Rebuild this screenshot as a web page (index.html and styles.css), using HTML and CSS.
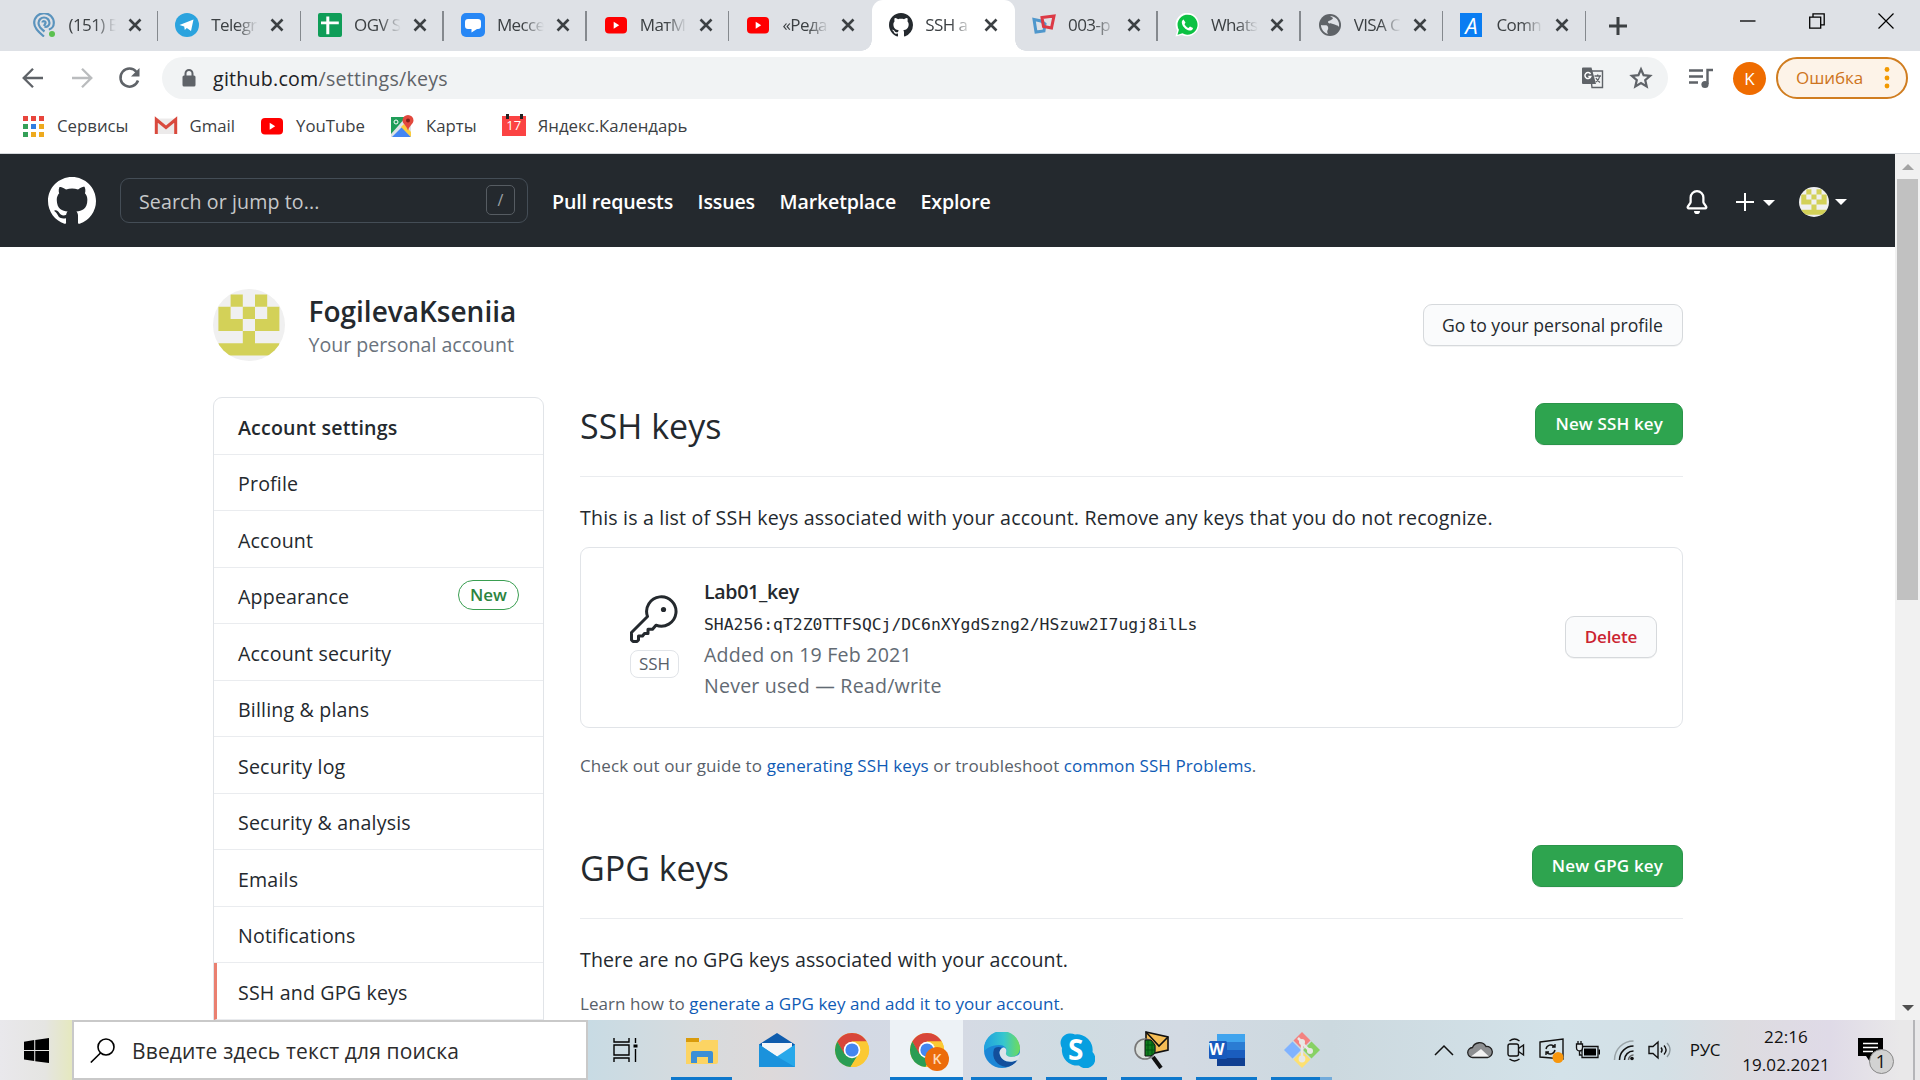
FILE: index.html
```html
<!DOCTYPE html>
<html lang="en">
<head>
<meta charset="utf-8">
<title>SSH and GPG keys</title>
<link rel="stylesheet" href="styles.css">
</head>
<body>
<svg class="defs" aria-hidden="true">
  <symbol id="x" viewBox="0 0 14 14"><path d="M1.500 1.500L12.500 12.500M12.500 1.500L1.500 12.500" stroke="#3c4043" stroke-width="2.600" fill="none"/></symbol>
  <symbol id="yt" viewBox="0 0 24 24"><rect x="1" y="4" width="22" height="16.500" rx="4" fill="#f00"/><path d="M9.700 8.700v7l5.500-3.500z" fill="#fff"/></symbol>
  <symbol id="mark" viewBox="0 0 16 16"><path fill="currentColor" fill-rule="evenodd" d="M8 0C3.580 0 0 3.580 0 8c0 3.540 2.290 6.530 5.470 7.590.4.070.55-.17.55-.38 0-.19-.01-.82-.01-1.490-2.010.37-2.530-.49-2.690-.94-.09-.23-.48-.94-.82-1.130-.28-.15-.68-.52-.01-.53.63-.01 1.080.58 1.230.82.72 1.210 1.870.87 2.330.66.070-.52.28-.87.51-1.070-1.780-.2-3.640-.89-3.640-3.950 0-.87.31-1.590.82-2.150-.08-.2-.36-1.020.08-2.120 0 0 .67-.21 2.200.82.64-.18 1.320-.27 2-.27s1.360.09 2 .27c1.530-1.040 2.200-.82 2.200-.82.44 1.100.16 1.920.08 2.120.51.56.82 1.270.82 2.150 0 3.070-1.870 3.750-3.650 3.950.29.25.54.73.54 1.480 0 1.070-.01 1.930-.01 2.200 0 .21.15.46.55.38A8.013 8.013 0 0016 8c0-4.420-3.580-8-8-8z"/></symbol>
  <symbol id="identicon" viewBox="0 0 72 72"><path fill="#f0f0f0" d="M0 0h72v72H0z"/><path fill="#d3d158" d="M17.600 5.500h12.200v12.200H17.600zM42 5.500h12.200v12.200H42zM5.400 17.700h12.200v12.200h12.200v12.200H5.400zM29.800 17.700H42v12.200H29.800zM54.200 17.700h12.200v24.400H42V29.900h12.200zM29.800 42.100H42v12.200H29.800zM5.400 54.300h61v12.200h-61z"/></symbol>
  <symbol id="chrome" viewBox="0 0 36 36"><circle cx="18" cy="18" r="17" fill="#fbc934"/><path fill="#d8463a" d="M3.300 9.500A17 17 0 0 1 32.700 9.500H18l-8 13z"/><path fill="#2a9d54" d="M3.300 9.500A17 17 0 0 0 16.500 35l8.200-13.500L10.500 22z"/><path fill="#fbc934" d="M18 9.500h14.700A17 17 0 0 1 16.500 35l8.500-13z"/><circle cx="18" cy="18" r="8.300" fill="#fff"/><circle cx="18" cy="18" r="6.600" fill="#4486f0"/></symbol>
</svg>

<header class="browser">
  <div class="tabstrip">
    <div class="tab"><svg class="fav" viewBox="0 0 24 24" fill="none" stroke="#5a93bd" stroke-width="2.200"><path d="M11 23.500C4 18 1.200 14 1.200 10a9.800 9.800 0 0 1 19.600 0c0 3-2 6-5 6.500M11.500 18.500C7.500 15.500 5.500 13 5.500 10a5.500 5.500 0 0 1 11 0c0 3-3 4.500-5 3.500M9.500 9.500c0-2 3.500-1.500 3 .5l-1.500 3"/><circle cx="19" cy="21" r="3" fill="#5bc04f" stroke="none"/></svg><span class="label">(151) В</span><svg class="close"><use href="#x"/></svg></div>
    <div class="tab"><svg class="fav" viewBox="0 0 24 24"><circle cx="12" cy="12" r="12" fill="#2ba3de"/><path d="M4.500 12L18.500 6.500 16 18l-4.200-3-2 2-.6-3.500z" fill="#fff"/></svg><span class="label">Telegr</span><svg class="close"><use href="#x"/></svg></div>
    <div class="tab"><svg class="fav" viewBox="0 0 24 24"><rect width="24" height="24" rx="2" fill="#0f9d58"/><path d="M8.300 3.500h3v5h9.500v2.700h-9.500v10h-3v-10H3V8.500h5.300z" fill="#fff"/></svg><span class="label">OGV S</span><svg class="close"><use href="#x"/></svg></div>
    <div class="tab"><svg class="fav" viewBox="0 0 24 24"><rect width="24" height="24" rx="5" fill="#2787f5"/><path d="M7 6h10a3 3 0 0 1 3 3v4a3 3 0 0 1-3 3h-1l-5.500 3.500V16H7a3 3 0 0 1-3-3V9a3 3 0 0 1 3-3z" fill="#fff"/></svg><span class="label">Мессе</span><svg class="close"><use href="#x"/></svg></div>
    <div class="tab"><svg class="fav"><use href="#yt"/></svg><span class="label">МатМ</span><svg class="close"><use href="#x"/></svg></div>
    <div class="tab no-line"><svg class="fav"><use href="#yt"/></svg><span class="label">«Реда</span><svg class="close"><use href="#x"/></svg></div>
    <div class="tab active"><svg class="fav mark"><use href="#mark"/></svg><span class="label">SSH a</span><svg class="close"><use href="#x"/></svg></div>
    <div class="tab"><svg class="fav" viewBox="0 0 24 24" fill="none" stroke-width="3"><path d="M2 6.500l7 1.500 4 3-1 7-8 1z" stroke="#4f97cc"/><path d="M10 4.500L22 3l-2.500 12-8-1.500z" stroke="#dc3a46"/></svg><span class="label">003-p</span><svg class="close"><use href="#x"/></svg></div>
    <div class="tab"><svg class="fav" viewBox="0 0 24 24"><path d="M.5 23.500l1.700-6A11.700 11.700 0 1 1 7 22z" fill="#fff"/><path d="M2.500 21.700l1.400-5A10 10 0 1 1 7.500 20.300z" fill="#0cc143"/><path d="M8.500 6.500l2 3-1 1.700c1 2 2.200 3 4 3.800l1.500-1.500 3 1.500c-.2 2-2 2.700-3.500 2.500-4-.6-7.500-4.500-7.700-8 0-1.500.7-2.500 1.700-3z" fill="#fff"/></svg><span class="label">Whats</span><svg class="close"><use href="#x"/></svg></div>
    <div class="tab"><svg class="fav" viewBox="0 0 24 24"><circle cx="12" cy="12" r="11" fill="#5f6368"/><path d="M3 12c3 1 6-1 7 2s-2 3 0 7c-4-1-7-5-7-9zM12 3l3 2c-1 3-5 2-5 4s3 1 5 2 5 1 6 3c1-6-3-11-9-11z" fill="#dee1e6"/></svg><span class="label">VISA С</span><svg class="close"><use href="#x"/></svg></div>
    <div class="tab"><span class="fav letter">A</span><span class="label">Comn</span><svg class="close"><use href="#x"/></svg></div>
    <div class="newtab"><svg width="18" height="18" viewBox="0 0 18 18"><path d="M9 0v18M0 9h18" stroke="#3c4043" stroke-width="3"/></svg></div>
    <div class="winctl">
      <svg width="16" height="16"><path d="M0 8h15.500" stroke="#000" stroke-width="1.300"/></svg>
      <svg width="16" height="16"><path d="M.7 4.200h11v11H.7zM4 4V.8h11.200v11H12" stroke="#000" stroke-width="1.300" fill="none"/></svg>
      <svg width="16" height="16"><path d="M.5 .5l15 15M15.500.5l-15 15" stroke="#000" stroke-width="1.200"/></svg>
    </div>
  </div>
  <div class="toolbar">
    <div class="navbtns">
      <svg width="24" height="24" viewBox="0 0 24 24" fill="none" stroke="#5f6368" stroke-width="2.300"><path d="M22 12H3M12 2.700L2.700 12l9.300 9.300"/></svg>
      <svg width="24" height="24" viewBox="0 0 24 24" fill="none" stroke="#babcbe" stroke-width="2.300"><path d="M2 12h19M12 2.700l9.300 9.300-9.300 9.300"/></svg>
      <svg width="24" height="24" viewBox="0 0 24 24" fill="none" stroke="#5f6368" stroke-width="2.500"><path d="M18.500 6A9 9 0 1 0 20 14.500"/><path d="M21.500 2v8.500H13z" fill="#5f6368" stroke="none"/></svg>
    </div>
    <div class="omnibox">
      <svg class="lock" width="14" height="19" viewBox="0 0 14 19"><rect x=".5" y="6.500" width="13" height="11" rx="1.500" fill="#5f6368"/><path d="M3.500 7V4.500a3.500 3.500 0 0 1 7 0V7" fill="none" stroke="#5f6368" stroke-width="2"/></svg>
      <span class="url">github.com<span>/settings/keys</span></span>
      <svg class="translate" width="24" height="24" viewBox="0 0 24 24"><path d="M9 5h12.500v16.500H11z" fill="#f1f3f4" stroke="#5f6368" stroke-width="1.400"/><path d="M2 1.500h8.500L15 18H2a1 1 0 0 1-1-1V2.500a1 1 0 0 1 1-1z" fill="#5f6368"/><path d="M9.500 8A3 3 0 1 0 9.800 10.500H7.300" fill="none" stroke="#fff" stroke-width="1.500"/><path d="M13.500 10h6.500M16.700 8.500V10M18.800 10c-.5 3-2.500 5-4 6M15 12c1 2 2.500 3.500 4 4.500" stroke="#5f6368" stroke-width="1.300" fill="none"/></svg>
      <svg width="24" height="24" viewBox="0 0 24 24"><path d="M12 3.200l2.600 6 6.500.6-4.900 4.300 1.500 6.400L12 17.100l-5.700 3.400 1.500-6.400-4.900-4.300 6.500-.6z" fill="none" stroke="#5f6368" stroke-width="2.200"/></svg>
    </div>
    <svg class="queue" width="24" height="24" viewBox="0 0 24 24" fill="none" stroke="#5f6368" stroke-width="2.400"><path d="M0 4.500h14M0 10.500h14M0 16.500h9M24 4h-5.500v14"/><circle cx="16" cy="18.500" r="3.600" fill="#5f6368" stroke="none"/></svg>
    <div class="person">K</div>
    <div class="error"><span>Ошибка</span><svg width="6" height="24" viewBox="0 0 6 24" fill="#f29900"><circle cx="3" cy="3.500" r="2.400"/><circle cx="3" cy="12" r="2.400"/><circle cx="3" cy="20" r="2.400"/></svg></div>
  </div>
  <nav class="bookmarks">
    <a><svg class="bi" viewBox="0 0 24 24"><path d="M2 2h5v5H2zM10 2h5v5h-5zM18 2h5v5h-5z" fill="#e8453c"/><path d="M2 10h5v5H2zM2 18h5v5H2z" fill="#34a058"/><path d="M10 10h5v5h-5z" fill="#2f7de1"/><path d="M18 10h5v5h-5zM10 18h5v5h-5zM18 18h5v5h-5z" fill="#eeaa1e"/></svg><span>Сервисы</span></a>
    <a><svg class="bi" viewBox="0 0 24 24"><path d="M1 4.500h22V20H1z" fill="#eceaea"/><path d="M2.300 20V5.500L12 13.500l9.700-8V20" fill="none" stroke="#d9493d" stroke-width="3"/></svg><span>Gmail</span></a>
    <a><svg class="bi"><use href="#yt"/></svg><span>YouTube</span></a>
    <a><svg class="bi" viewBox="0 0 24 24"><path d="M1 3h20v20H1z" fill="#dfe3e6"/><path d="M1 3h15L1 20z" fill="#1f9d58"/><path d="M2 23l10-10 9 10z" fill="#4386f4"/><path d="M11 13l3-3 7 8v5z" fill="#fccd3c"/><path d="M18 1a5.500 5.500 0 0 1 5.500 5.500c0 3-4 5-5.500 10-1.500-5-5.500-7-5.500-10A5.500 5.500 0 0 1 18 1z" fill="#e2483d"/><circle cx="18" cy="6.500" r="2" fill="#851f1a"/><circle cx="6" cy="8" r="2" fill="none" stroke="#fff"/></svg><span>Карты</span></a>
    <a><span class="cal">17</span><span>Яндекс.Календарь</span></a>
  </nav>
</header>

<div class="viewport">
  <div class="page">
    <header class="gh">
      <svg class="logo"><use href="#mark"/></svg>
      <div class="search"><span>Search or jump to...</span><kbd>/</kbd></div>
      <nav><a>Pull requests</a><a>Issues</a><a>Marketplace</a><a>Explore</a></nav>
      <div class="user">
        <svg width="24" height="24" viewBox="0 0 16 16" fill="#fff"><path d="M8 16a2 2 0 001.985-1.750c.017-.137-.097-.25-.235-.25h-3.500c-.138 0-.252.113-.235.250A2 2 0 008 16z"/><path fill-rule="evenodd" d="M8 1.500A3.500 3.500 0 004.500 5v2.947c0 .346-.102.683-.294.970l-1.703 2.556 10.990.010-1.700-2.565a1.750 1.750 0 01-.294-.970V5A3.500 3.500 0 008 1.500zM3 5a5 5 0 0110 0v2.947c0 .050.015.098.042.139l1.703 2.555A1.518 1.518 0 0113.482 13H2.518a1.518 1.518 0 01-1.263-2.360l1.703-2.554A.25.25 0 003 7.947V5z"/></svg>
        <svg class="plus" width="18" height="18"><path d="M9 0v18M0 9h18" stroke="#fff" stroke-width="2"/></svg>
        <i class="caret low"></i>
        <svg class="mini"><use href="#identicon"/></svg>
        <i class="caret"></i>
      </div>
    </header>
    <div class="container">
      <section class="profile">
        <svg class="avatar"><use href="#identicon"/></svg>
        <div class="who"><h1>FogilevaKseniia</h1><p>Your personal account</p></div>
        <button class="btn goto">Go to your personal profile</button>
      </section>
      <div class="columns">
        <nav class="menu">
          <h2>Account settings</h2>
          <a>Profile</a>
          <a>Account</a>
          <a>Appearance<b class="new">New</b></a>
          <a>Account security</a>
          <a>Billing &amp; plans</a>
          <a>Security log</a>
          <a>Security &amp; analysis</a>
          <a>Emails</a>
          <a>Notifications</a>
          <a class="current">SSH and GPG keys</a>
        </nav>
        <main>
          <div class="subhead"><h2>SSH keys</h2><button class="btn primary">New SSH key</button></div>
          <p class="lead">This is a list of SSH keys associated with your account. Remove any keys that you do not recognize.</p>
          <div class="keybox">
            <div class="kind">
              <svg width="48" height="48" viewBox="0 0 48 48" fill="none" stroke="#24292e" stroke-width="3" stroke-linejoin="round"><path d="M17.500 21.500A14.700 14.700 0 1 1 26 30.200L22.500 34.300H18V38.500H14.500L12.500 41H8.500V45L7 46.500H3L1.500 45V37.500z"/><circle cx="33.500" cy="14.500" r="2.600" fill="#24292e" stroke="none"/></svg>
              <span class="tag">SSH</span>
            </div>
            <div class="info">
              <strong>Lab01_key</strong>
              <code>SHA256:qT2Z0TTFSQCj/DC6nXYgdSzng2/HSzuw2I7ugj8ilLs</code>
              <span class="muted">Added on 19 Feb 2021</span>
              <span class="muted">Never used — Read/write</span>
            </div>
            <button class="btn danger">Delete</button>
          </div>
          <p class="help">Check out our guide to <a>generating SSH keys</a> or troubleshoot <a>common SSH Problems</a>.</p>
          <div class="subhead gpg"><h2>GPG keys</h2><button class="btn primary">New GPG key</button></div>
          <p class="lead none">There are no GPG keys associated with your account.</p>
          <p class="help second">Learn how to <a>generate a GPG key and add it to your account</a>.</p>
        </main>
      </div>
    </div>
  </div>
  <div class="scroll"><i class="up"></i><i class="thumb"></i><i class="down"></i></div>
</div>

<footer class="taskbar">
  <div class="start"><svg width="25" height="25" viewBox="0 0 24 24"><path d="M0 3.500L9.800 2v9.500H0zM10.800 1.900L24 0v11.500H10.800zM0 12.500h9.800V22L0 20.600zM10.800 12.500H24V24l-13.200-1.800z"/></svg></div>
  <div class="find"><svg width="25" height="25" viewBox="0 0 25 25" fill="none" stroke="#000" stroke-width="1.600"><circle cx="16" cy="9" r="8"/><path d="M10.500 15L.8 24.500"/></svg><span>Введите здесь текст для поиска</span></div>
  <div class="apps">
    <div class="view"><svg width="27" height="24" viewBox="0 0 27 24" fill="none" stroke="#000" stroke-width="1.400"><path d="M1 0v4h15V0M1 7h15v10H1zM1 24v-4h15v4M22.500 0v5M22.500 11v13"/><path d="M20.500 6.500h4v3h-4z" fill="#000" stroke="none"/></svg></div>
    <div class="run"><svg width="36" height="36" viewBox="0 0 36 36"><path d="M2 6h13v6H2z" fill="#d99b0b"/><path d="M2 10h14l2-2h16v22a2 2 0 0 1-2 2H2z" fill="#fcd463"/><path d="M7 31V21a2 2 0 0 1 2-2h18a2 2 0 0 1 2 2v10h-5v-6H13v6z" fill="#3d8fd6"/></svg></div>
    <div><svg width="36" height="36" viewBox="0 0 36 36"><path d="M0 12.500L18 1l18 11.500V18H0z" fill="#0f5cad"/><path d="M3 11h30v16H3z" fill="#f4f6f8"/><path d="M0 12.500l18 12 18-12V35H0z" fill="#27a8ea"/><path d="M0 12.500l18 12L36 35H0z" fill="#1b92dc"/></svg></div>
    <div><svg width="36" height="36"><use href="#chrome"/></svg></div>
    <div class="run on"><svg width="36" height="36"><use href="#chrome"/></svg><em>K</em></div>
    <div class="run"><svg width="36" height="36" viewBox="0 0 36 36"><defs><linearGradient id="eg" x1="0" x2="1"><stop offset="0" stop-color="#1f9fe0"/><stop offset=".55" stop-color="#36c6cf"/><stop offset="1" stop-color="#6fdc5a"/></linearGradient></defs><circle cx="18" cy="18" r="18" fill="#1b86d6"/><path d="M0 18A18 18 0 0 1 36 16c0 6-4 9-9 9s-6-2-5-4 1-8-7-8S1 17 0 20z" fill="url(#eg)"/><path d="M10 17c-3 9 3 17 12 18 5-.5 9-3 11.500-7-8 4-17 1-18-7 0-3 2-5 3-5-4-2-7-1-8.500 1z" fill="#134f9c"/><path d="M15.500 21c0-3 2-5.500 4.500-5.500 3 1 2.500 4 2 5.500s1 4 5 4 8-2 9-4c0 3-1 5-2.500 7-8 4-17 1-18-7z" fill="#dce4eb"/></svg></div>
    <div class="run"><svg width="36" height="36" viewBox="0 0 36 36"><path d="M10 1.500a10 10 0 0 1 6 1A15.500 15.500 0 0 1 33.500 20 9.500 9.500 0 0 1 20 33.500 15.500 15.500 0 0 1 3 16 9.500 9.500 0 0 1 10 1.500z" fill="#079fe0"/></svg><span class="sk">S</span></div>
    <div class="run"><svg width="38" height="38" viewBox="0 0 38 38"><path d="M13 1l22 5v13L17 23l-4-4z" fill="#f5bd55" stroke="#111" stroke-width="1.600"/><path d="M13 1l13 14 9-9" fill="none" stroke="#111" stroke-width="1.600"/><circle cx="12" cy="18" r="10" fill="#dadfdc" stroke="#777" stroke-width="1.600"/><path d="M12 9h6l4 5v8l-4 3h-6z" fill="#117d1c" stroke="#111"/><path d="M15 9v16M19 11v13M12 14h9M12 19h9" stroke="#051"/><path d="M20 26l8 11" stroke="#111" stroke-width="4"/></svg></div>
    <div class="run"><svg width="36" height="36" viewBox="0 0 36 36"><path d="M8 2h28v8.500H8z" fill="#40a4ee"/><path d="M8 10h28v8H8z" fill="#2b7cd3"/><path d="M8 18h28v8H8z" fill="#1a5dbe"/><path d="M8 26h28v8H8z" fill="#103f91"/><rect y="9" width="18" height="18" rx="1.500" fill="#185abd"/></svg><span class="wd">W</span></div>
    <div class="run split"><svg width="38" height="38" viewBox="0 0 38 38"><path d="M19 1l8.500 8.500L19 18l-8.500-8.500z" fill="#f38280"/><path d="M9.500 10.500L18 19l-8.500 8.500L1 19z" fill="#80b3ff"/><path d="M28.500 10.500L37 19l-8.500 8.500L20 19z" fill="#88d165"/><path d="M19 20l8.500 8.500L19 37l-8.500-8.500z" fill="#fde071"/><path d="M15 7l4 4v17M19 12l8 8" stroke="#e8e8e6" stroke-width="2.500" fill="none"/><circle cx="19" cy="11" r="3" fill="#e8e8e6"/><circle cx="19" cy="28" r="3.400" fill="#e8e8e6"/><circle cx="27" cy="20" r="3" fill="#e8e8e6"/></svg></div>
  </div>
  <div class="tray">
    <svg width="20" height="12" viewBox="0 0 20 12"><path d="M1 11l9-9 9 9" fill="none" stroke="#111" stroke-width="1.500"/></svg>
    <svg width="26" height="20" viewBox="0 0 26 20"><path d="M6 17.500a5 5 0 0 1-.5-10A7.500 7.500 0 0 1 19 6.500a5.500 5.500 0 0 1 1.500 11z" fill="#8d8f91" stroke="#222" stroke-width="1.300"/><path d="M4 16.500L14 9l8 7.500z" fill="#f2f2f2"/></svg>
    <svg width="18" height="24" viewBox="0 0 18 24" fill="none" stroke="#111" stroke-width="1.400"><rect x="1" y="6" width="10.500" height="12" rx="2"/><path d="M11.500 10.500L16.500 7v10l-5-3.500M2.500 3c3-2.300 7-2.300 10 0M2.500 21c3 2.300 7 2.300 10 0"/></svg>
    <svg width="26" height="26" viewBox="0 0 26 26" fill="none" stroke="#111" stroke-width="1.400"><path d="M1 5l23-3v20l-23-2z"/><path d="M7 12a5 5 0 0 1 8.500-2.500M16 7v3h-3M16 13a5 5 0 0 1-8.500 2.500M7 18v-3h3"/><circle cx="19" cy="20.500" r="5.500" fill="#f7960c" stroke="none"/></svg>
    <svg width="26" height="20" viewBox="0 0 26 20"><path d="M7 6.500h16v11H7z" fill="none" stroke="#111" stroke-width="1.300"/><path d="M9 8.500h12v7H9zM23.500 9.500H25v5h-1.500z"/><path d="M1.500 4h6v4a3 3 0 0 1-6 0zM3 4V1M6 4V1M4.500 10.500V15H7" fill="#dfe7ea" stroke="#111" stroke-width="1.300"/></svg>
    <svg width="22" height="22" viewBox="0 0 22 22" fill="none" stroke="#111" stroke-width="1.500"><path d="M1.500 21A19 19 0 0 1 20.500 2" stroke="#9aa4a8"/><path d="M6.500 21a14 14 0 0 1 14-14M11.500 21a9 9 0 0 1 9-9"/><circle cx="19" cy="19.500" r="1.800" fill="#111" stroke="none"/><path d="M15.500 21a5 5 0 0 1 5-5" stroke="#666"/></svg>
    <svg width="26" height="20" viewBox="0 0 26 20" fill="none" stroke="#111" stroke-width="1.400"><path d="M2 6.500h4L11 2v16l-5-4.500H2zM14 7.500c1.300 1.500 1.300 3.500 0 5M17 5.500c2.500 2.700 2.500 6.300 0 9"/><path d="M20 3c4 4 4 10 0 14" stroke="#8d999e"/></svg>
    <span class="lang">РУС</span>
    <span class="clock">22:16<br>19.02.2021</span>
    <span class="notes"><svg width="25" height="25" viewBox="0 0 25 25"><path d="M0 0h25v18H15l-3 6-4-6H0z"/><path d="M5 5.500h15M5 9.500h15M5 13.500h10" stroke="#fff" stroke-width="1.300"/></svg><em>1</em></span>
    <span class="desk"></span>
  </div>
</footer>
</body>
</html>
```
FILE: styles.css
```css
* { box-sizing: border-box; }
body { margin: 0; width: 1920px; height: 1080px; overflow: hidden; background: #fff; color: #24292e; font: 19.6px/31.5px "Open Sans", "Noto Sans", sans-serif; display: flex; flex-direction: column; }
h1, h2, p { margin: 0; }
svg { display: block; flex: none; }
.defs { position: absolute; width: 0; height: 0; }

/* browser chrome */
.browser { height: 154px; flex: none; border-bottom: 1px solid #d5d8dc; }
.tabstrip { height: 51px; background: #dee1e6; display: flex; padding-left: 15px; }
.tab { width: 142.8px; height: 51px; flex: none; display: flex; align-items: center; padding: 0 0 1px 17.5px; position: relative; }
.tab::after { content: ""; position: absolute; right: -.5px; top: 11px; width: 1.5px; height: 30px; background: #85898e; }
.tab.no-line::after, .tab.active::after { display: none; }
.tab.active { background: #fff; border-radius: 11px 11px 0 0; }
.tab.active::before { content: ""; position: absolute; left: -11px; right: -11px; bottom: 0; height: 11px; background: radial-gradient(circle at 0 0, transparent 10.5px, #fff 11px) left / 11px 11px no-repeat, radial-gradient(circle at 100% 0, transparent 10.5px, #fff 11px) right / 11px 11px no-repeat; }
.fav { width: 24px; height: 24px; }
.fav.mark { color: #24292e; }
.fav.letter { width: 22px; margin-right: 2px; background: #0a7df2; color: #fff; font: italic 22px/24px "Open Sans", sans-serif; text-align: center; }
.label { width: 47px; margin-left: 12px; overflow: hidden; white-space: nowrap; font-size: 17px; letter-spacing: -.6px; color: #3c4043; -webkit-mask-image: linear-gradient(90deg, #000 55%, transparent 100%); mask-image: linear-gradient(90deg, #000 55%, transparent 100%); }
.close { width: 14px; height: 14px; margin-left: 12px; }
.newtab { width: 65px; display: flex; align-items: center; justify-content: center; }
.winctl { margin-left: auto; width: 207px; display: flex; justify-content: space-around; padding: 13px 0 0; }
.toolbar { height: 55px; display: flex; align-items: center; padding: 0 12px 1px 21px; }
.navbtns { width: 141px; display: flex; gap: 24.5px; }
.omnibox { width: 1506px; height: 42px; border-radius: 21px; background: #f1f3f4; display: flex; align-items: center; padding: 0 15px 0 20px; }
.url { margin-left: 17px; padding-top: 1px; letter-spacing: .24px; color: #202124; }
.url span { color: #5f6368; }
.translate { margin-left: auto; margin-right: 24px; }
.queue { margin-left: 21px; }
.person { width: 33px; height: 33px; margin-left: 20px; border-radius: 50%; background: #ef6c00; color: #fff; font-size: 17px; line-height: 33px; text-align: center; }
.error { width: 132px; height: 42px; margin-left: auto; border: 2px solid #d07d20; border-radius: 21px; background: #fdf3e8; color: #ce7420; display: flex; align-items: center; justify-content: space-between; padding: 0 16px 0 18px; font-size: 17px; letter-spacing: -.08px; }
.bookmarks { display: flex; align-items: center; height: 40px; padding-left: 21px; font-size: 16.8px; color: #3c4043; }
.bookmarks a { display: flex; align-items: center; gap: 12px; margin-right: 25px; white-space: nowrap; }
.bi { width: 24px; height: 24px; }
.cal { width: 24px; height: 20px; background: #fb4343; color: #fff; font-size: 13px; line-height: 19px; text-align: center; position: relative; }
.cal::before { content: ""; position: absolute; left: 4px; right: 3px; top: -2px; height: 5px; border: solid #222; border-width: 0 3px; }

/* page */
.viewport { height: 866px; flex: none; display: flex; }
.page { width: 1895px; height: 866px; overflow: hidden; }
.gh { height: 93px; background: #24292e; display: flex; align-items: center; padding: 0 48px; color: #fff; }
.logo { width: 48px; height: 48px; }
.search { width: 408px; height: 45px; margin-left: 24px; border: 1px solid #444d56; border-radius: 9px; display: flex; align-items: center; justify-content: space-between; padding: 3px 12px 0 18px; color: #c6c8ca; letter-spacing: .1px; }
.search kbd { width: 29px; height: 30px; margin-top: -4px; border: 1px solid #565c62; border-radius: 5px; font: 16px/28px "Open Sans", sans-serif; text-align: center; color: #9da1a5; }
.gh nav { display: flex; gap: 24.5px; margin-left: 24px; padding-top: 2px; font-weight: 600; letter-spacing: -.15px; white-space: nowrap; }
.user { margin-left: auto; display: flex; align-items: center; padding-top: 2px; }
.plus { margin-left: 27px; }
.caret { border: 6px solid transparent; border-top-color: #fff; border-bottom: 0; margin-left: 6px; }
.caret.low { margin: 3px 24px 0 9px; }
.mini { width: 30px; height: 30px; border-radius: 50%; }
.container { width: 1470px; margin-left: 213px; padding-top: 42px; }
.profile { height: 72px; display: flex; align-items: center; }
.avatar { width: 72px; height: 72px; border-radius: 50%; }
.who { margin-left: 23.5px; padding-top: 2px; white-space: nowrap; }
.who h1 { font-size: 28px; font-weight: 600; line-height: 36px; }
.who p { line-height: 31px; color: #6a737d; }
.btn { height: 42px; padding: 0 19px; border: 1px solid #d6d9dc; border-radius: 9px; background: #fafbfc; color: #24292e; font: 600 17px/38px "Open Sans", "Noto Sans", sans-serif; white-space: nowrap; box-shadow: 0 1px 0 rgba(27,31,35,.05); }
.goto { width: 260px; margin-left: auto; padding: 0 18px; font-size: 17.6px; font-weight: 500; text-align: left; }
.columns { display: flex; justify-content: space-between; margin-top: 36px; }
.menu { width: 331px; height: 640px; border: 1px solid #e1e4e8; border-radius: 9px; letter-spacing: .17px; }
.menu h2, .menu a { height: 56.5px; border-bottom: 1px solid #eaecef; display: flex; align-items: center; padding: 3px 24px 0; font-size: 19.6px; white-space: nowrap; }
.menu h2 { font-weight: 600; }
.menu .current { border-left: 3px solid #ea8070; padding-left: 21px; }
.new { margin: -4px 0 0 auto; width: 61px; height: 30px; border: 1.5px solid #3a9e51; border-radius: 15px; color: #2b8440; font-size: 17px; font-weight: 600; line-height: 27px; letter-spacing: 0; text-align: center; }
main { width: 1103px; }
.subhead { height: 80px; border-bottom: 1px solid #eaecef; display: flex; justify-content: space-between; padding-top: 6px; }
.subhead h2 { font-size: 34px; font-weight: 400; line-height: 46px; white-space: nowrap; }
.primary { color: #fff; background: #2ea44f; border-color: #2b944a; letter-spacing: .15px; }
.lead { margin-top: 25px; letter-spacing: .18px; white-space: nowrap; }
.lead.none { letter-spacing: .1px; }
.keybox { height: 181px; margin-top: 13px; border: 1px solid #e1e4e8; border-radius: 9px; display: flex; align-items: center; padding: 0 25px 0 49px; }
.kind { width: 49px; padding-bottom: 1px; }
.tag { display: block; width: 49px; height: 28px; margin-top: 7px; border: 1px solid #e1e4e8; border-radius: 8px; color: #586069; font-size: 17px; line-height: 26px; text-align: center; }
.info { margin-left: 25px; padding-top: 4px; display: flex; flex-direction: column; white-space: nowrap; }
.info strong { font-weight: 600; letter-spacing: -.33px; }
.info code { font: 16.4px/31px "DejaVu Sans Mono", monospace; padding-top: 1px; margin-bottom: -1px; }
.muted { color: #626a73; letter-spacing: .2px; }
.danger { margin-left: auto; width: 92px; padding: 0; color: #cb2431; font-size: 17px; letter-spacing: -.15px; }
.help { margin-top: 22px; font-size: 17px; letter-spacing: .1px; color: #586069; white-space: nowrap; }
.help a { color: #0f5bb5; }
.gpg { margin-top: 58px; }
.help.second { margin-top: 12px; letter-spacing: .05px; }
.scroll { width: 25px; background: #f1f1f1; position: relative; }
.scroll i { position: absolute; }
.scroll .up { left: 7px; top: 10px; border: 6px solid transparent; border-bottom-color: #a3a3a3; border-top: 0; }
.scroll .thumb { left: 2px; top: 25px; width: 21px; height: 421px; background: #c1c1c1; }
.scroll .down { left: 7px; bottom: 9px; border: 6px solid transparent; border-top-color: #505050; border-bottom: 0; }

/* taskbar */
.taskbar { height: 60px; flex: none; display: flex; background: linear-gradient(90deg, #e9e8ec 0, #e5e5e2 45px, #e5e8c0 71px, #c8dbe4 588px, #d6dbde 690px, #ddd9da 770px, #d3d9e4 850px, #d5dae4 960px, #cfdce2 1080px, #d3dae3 1180px, #ccd9df 1330px, #d3e2e9 1560px, #d3e0e6 1660px, #dddce0 1740px, #dfdae7 1830px, #e9e8e9 1900px); }
.start { width: 72px; display: flex; align-items: center; justify-content: center; }
.find { width: 516px; border: 2px solid #c9c9c9; background: #fff; display: flex; align-items: center; gap: 17px; padding-left: 16px; color: #2c2c2c; font-size: 21px; letter-spacing: .15px; white-space: nowrap; }
.find span { padding-top: 4px; }
.apps { display: flex; width: 751px; }
.apps div { width: 75px; flex: none; display: flex; align-items: center; justify-content: center; position: relative; }
.apps .view { width: 76px; }
.run::after { content: ""; position: absolute; bottom: 0; left: 7px; width: 61px; height: 3px; background: #0e78cc; }
.run.on { background: linear-gradient(#edf2f6, #edf2f6) center / 73px 100% no-repeat; }
.apps .run.on::after { left: 1px; width: 73px; }
.run.split::after { background: linear-gradient(90deg, #0e78cc 49px, #72abdb 49px); }
.run em { position: absolute; left: 36px; top: 27px; width: 24px; height: 24px; border-radius: 50%; background: #ec6c0b; color: #ffd9b5; font: 600 14px/24px "Open Sans", sans-serif; text-align: center; }
.sk, .wd { position: absolute; color: #fff; font-weight: 700; }
.sk { font-size: 28px; left: 29px; top: 14px; }
.wd { font-size: 16px; left: 20px; top: 14px; }
.tray { margin-left: auto; display: grid; grid-template-columns: repeat(7, 36px) 54px 108px 73px 7px; width: 494px; align-items: center; justify-items: center; color: #111; font-size: 17px; }
.lang { letter-spacing: -.3px; }
.clock { line-height: 28px; padding-top: 1px; text-align: center; letter-spacing: .1px; }
.notes { position: relative; margin-left: -13px; }
.notes em { position: absolute; left: 11px; top: 11px; width: 25px; height: 25px; border: 1.5px solid #888; border-radius: 50%; background: #d2d2d2; font: 18px/22px "Open Sans", sans-serif; text-align: center; }
.desk { width: 7px; height: 60px; border-left: 2px solid #b5b5b8; }
```
